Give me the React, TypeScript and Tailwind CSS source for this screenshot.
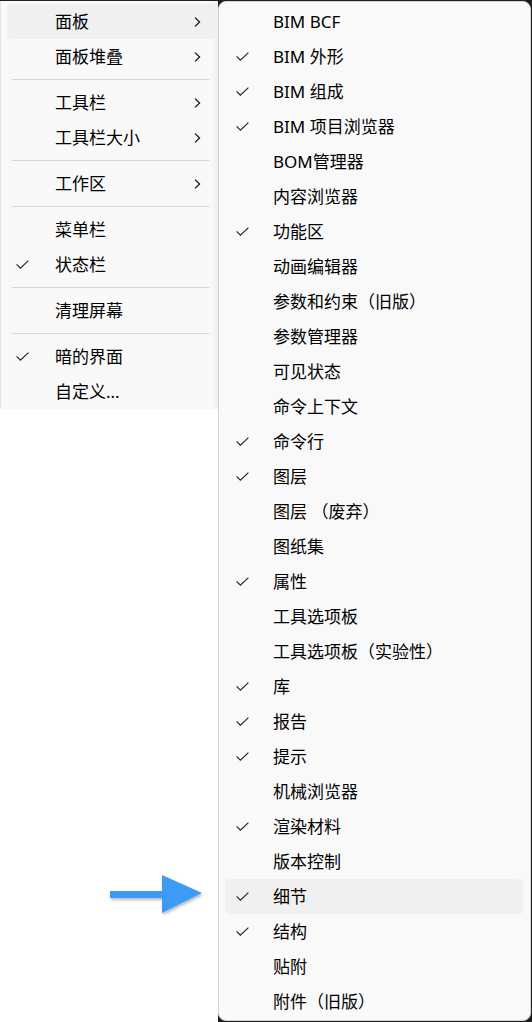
import * as React from 'react';

type Entry = { label: string; checked?: boolean; sub?: boolean; active?: boolean } | 'sep';

const mainMenu: Entry[] = [
  { label: '面板', sub: true, active: true },
  { label: '面板堆叠', sub: true },
  'sep',
  { label: '工具栏', sub: true },
  { label: '工具栏大小', sub: true },
  'sep',
  { label: '工作区', sub: true },
  'sep',
  { label: '菜单栏' },
  { label: '状态栏', checked: true },
  'sep',
  { label: '清理屏幕' },
  'sep',
  { label: '暗的界面', checked: true },
  { label: '自定义...' },
];

const panels: { label: string; checked?: boolean; active?: boolean }[] = [
  { label: 'BIM BCF' },
  { label: 'BIM 外形', checked: true },
  { label: 'BIM 组成', checked: true },
  { label: 'BIM 项目浏览器', checked: true },
  { label: 'BOM管理器' },
  { label: '内容浏览器' },
  { label: '功能区', checked: true },
  { label: '动画编辑器' },
  { label: '参数和约束（旧版）' },
  { label: '参数管理器' },
  { label: '可见状态' },
  { label: '命令上下文' },
  { label: '命令行', checked: true },
  { label: '图层', checked: true },
  { label: '图层 （废弃）' },
  { label: '图纸集' },
  { label: '属性', checked: true },
  { label: '工具选项板' },
  { label: '工具选项板（实验性）' },
  { label: '库', checked: true },
  { label: '报告', checked: true },
  { label: '提示', checked: true },
  { label: '机械浏览器' },
  { label: '渲染材料', checked: true },
  { label: '版本控制' },
  { label: '细节', checked: true, active: true },
  { label: '结构', checked: true },
  { label: '贴附' },
  { label: '附件（旧版）' },
];

function Check() {
  return (
    <svg width="13" height="9" viewBox="0 0 13 9" fill="none">
      <polyline points="0.6,4.4 4.4,8.2 12.4,0.6" stroke="#222" strokeWidth="1.15" />
    </svg>
  );
}

function Chevron() {
  return (
    <svg width="7" height="10" viewBox="0 0 7 10" fill="none">
      <polyline points="1,0.6 5.6,5 1,9.4" stroke="#111" strokeWidth="1.25" />
    </svg>
  );
}

function Row({ label, checked, sub, active, checkPad }: { label: string; checked?: boolean; sub?: boolean; active?: boolean; checkPad: string }) {
  return (
    <div className={`flex items-center h-[35px] rounded-[4px] ${active ? 'bg-[#f0f0f0]' : ''}`}>
      <div className={`w-[48px] shrink-0 flex items-center ${checkPad}`}>{checked && <Check />}</div>
      <span className="flex-1 text-[17px] text-black leading-none whitespace-nowrap">{label}</span>
      {sub && (
        <div className="w-[25px] shrink-0 flex items-center pl-[4px]">
          <Chevron />
        </div>
      )}
    </div>
  );
}

export default function App() {
  return (
    <div
      className="w-[532px] h-[1022px] bg-white overflow-hidden flex flex-col relative"
      style={{ fontFamily: '"Noto Sans", "Noto Sans CJK SC", sans-serif' }}
    >
      <div className="h-px bg-[#1f1f1f] shrink-0" />
      <div className="flex flex-1 min-h-0">
        {/* main menu */}
        <div className="w-[218px] shrink-0">
          <div className="border-l border-[#e3e3e3] pl-[6px] pr-[3px] pt-[3px] bg-gradient-to-r from-[#f9f9f9] from-[97%] to-[#efefef]">
            {mainMenu.map((e, i) =>
              e === 'sep' ? (
                <div key={i} className="h-[11px] flex items-center px-[5px]">
                  <div className="h-px w-full bg-[#d8d8d8]" />
                </div>
              ) : (
                <Row key={i} {...e} checkPad="pl-[9px]" />
              )
            )}
          </div>
        </div>

        {/* panels submenu */}
        <div className="flex-1 bg-[#1f1f1f] flex flex-col pr-px pb-px">
          <div className="flex-1 bg-[#f9f9f9] border border-[#d4d4d4] rounded-[8px] pt-[2px] pl-[6px] pr-[7px]">
            {panels.map((p, i) => (
              <Row key={i} {...p} checkPad="pl-[11px]" />
            ))}
          </div>
        </div>
      </div>

      {/* pointer arrow */}
      <svg className="absolute left-[104px] top-[868px]" width="110" height="54" viewBox="0 0 110 54">
        <defs>
          <filter id="sh" x="-20%" y="-30%" width="140%" height="160%">
            <feDropShadow dx="1" dy="2" stdDeviation="1.6" floodColor="#000" floodOpacity="0.28" />
          </filter>
        </defs>
        <g filter="url(#sh)" fill="#3d9bf6">
          <rect x="6" y="23" width="56" height="7" />
          <polygon points="58,7 98,25 58,45" />
        </g>
      </svg>
    </div>
  );
}
